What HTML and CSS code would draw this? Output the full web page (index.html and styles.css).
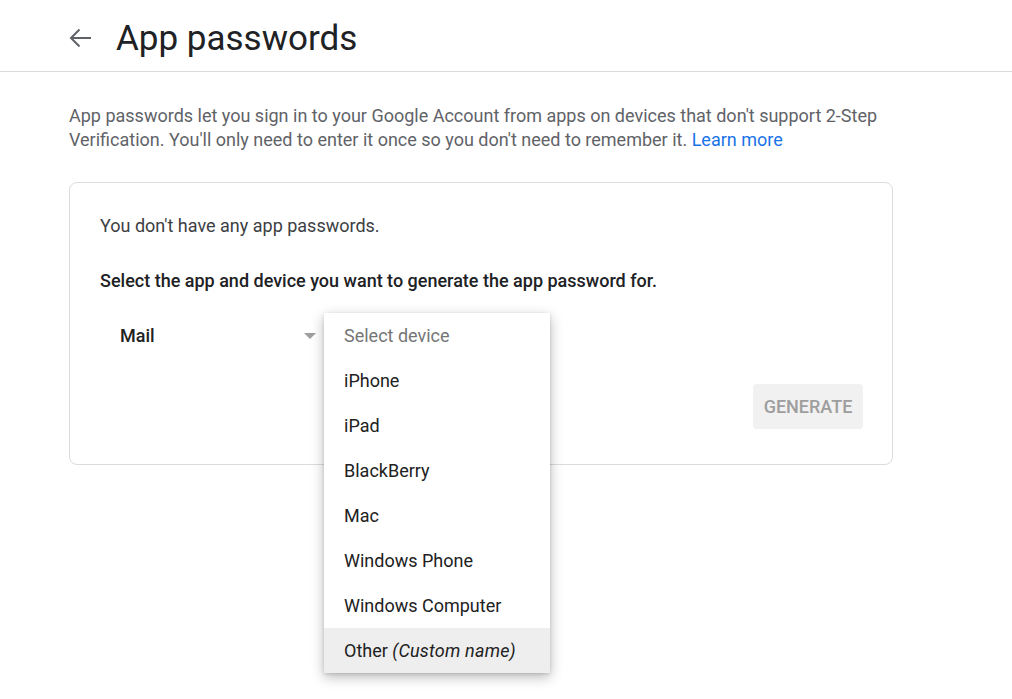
FILE: index.html
```html
<!DOCTYPE html>
<html>
<head>
<meta charset="utf-8">
<link rel="stylesheet" href="styles.css">
</head>
<body>
<header class="header">
  <svg class="back" width="24" height="20" viewBox="0 0 24 20"><path d="M22 10H2M10.5 1.5L2 10l8.5 8.5" fill="none" stroke="#5f6368" stroke-width="2"/></svg>
  <h1 class="title">App passwords</h1>
</header>
<main class="content">
  <p class="intro">App passwords let you sign in to your Google Account from apps on devices that don't support 2-Step Verification. You'll only need to enter it once so you don't need to remember it. <a class="link" href="#">Learn more</a></p>
  <section class="card">
    <p class="none">You don't have any app passwords.</p>
    <p class="select-label">Select the app and device you want to generate the app password for.</p>
    <div class="selects">
      <div class="select app">
        <span class="select-value">Mail</span>
        <span class="caret"></span>
      </div>
      <div class="select device">
        <ul class="menu">
          <li class="item placeholder">Select device</li>
          <li class="item">iPhone</li>
          <li class="item">iPad</li>
          <li class="item">BlackBerry</li>
          <li class="item">Mac</li>
          <li class="item">Windows Phone</li>
          <li class="item">Windows Computer</li>
          <li class="item active">Other <em class="hint">(Custom name)</em></li>
        </ul>
      </div>
    </div>
    <div class="actions">
      <button class="generate">GENERATE</button>
    </div>
  </section>
</main>
</body>
</html>
```

FILE: styles.css
```css
html, body {
  margin: 0;
  padding: 0;
  background: #fff;
  font-family: Roboto, "Liberation Sans", Arial, sans-serif;
}
body {
  min-height: 699px;
}
.header {
  height: 72px;
  border-bottom: 1px solid #dadce0;
  display: flex;
  align-items: center;
  padding-left: 69px;
  padding-top: 5px;
  box-sizing: border-box;
}
.back {
  display: block;
  margin-right: 23px;
}
.title {
  margin: 0;
  font-size: 35px;
  font-weight: 400;
  color: #202124;
  letter-spacing: 0;
}
.content {
  padding-left: 69px;
  width: 824px;
}
.intro {
  margin: 32px 0 0;
  font-size: 18px;
  line-height: 24px;
  color: #5f6368;
}
.link {
  color: #1a73e8;
  text-decoration: none;
}
.card {
  margin-top: 30px;
  border: 1px solid #dadce0;
  border-radius: 8px;
  padding: 30px 29px 35px 30px;
  height: 283px;
  box-sizing: border-box;
}
.none {
  margin: 0;
  font-size: 18px;
  line-height: 25px;
  color: #3c4043;
}
.select-label {
  margin: 30px 0 0;
  font-size: 18px;
  line-height: 25px;
  font-weight: 500;
  color: #202124;
}
.selects {
  display: flex;
  margin-top: 20px;
  height: 45px;
}
.select {
  position: relative;
  height: 45px;
  display: flex;
  align-items: center;
}
.app {
  width: 224px;
  box-sizing: border-box;
  padding-left: 20px;
}
.select-value {
  font-size: 18px;
  font-weight: 500;
  color: #212121;
  flex: 1;
}
.caret {
  width: 0;
  height: 0;
  border-left: 6px solid transparent;
  border-right: 6px solid transparent;
  border-top: 6px solid #9e9e9e;
  margin-right: 8px;
}
.device {
  width: 226px;
}
.menu {
  position: absolute;
  left: 0;
  top: 0;
  width: 226px;
  margin: 0;
  padding: 0;
  list-style: none;
  background: #fff;
  box-shadow: 0 4px 12px rgba(0, 0, 0, 0.28), 0 1px 3px rgba(0, 0, 0, 0.12);
  z-index: 2;
}
.item {
  height: 45px;
  line-height: 45px;
  padding-left: 20px;
  font-size: 18px;
  color: #212121;
}
.placeholder {
  color: #757575;
}
.active {
  background: #eeeeee;
}
.hint {
  font-style: italic;
  letter-spacing: 0.2px;
}
.actions {
  display: flex;
  justify-content: flex-end;
  margin-top: 26px;
}
.generate {
  width: 110px;
  height: 45px;
  border: none;
  border-radius: 4px;
  background: #f1f1f1;
  color: #9e9e9e;
  font-family: Roboto, "Liberation Sans", Arial, sans-serif;
  font-size: 18px;
  font-weight: 500;
  padding: 0;
}
```
